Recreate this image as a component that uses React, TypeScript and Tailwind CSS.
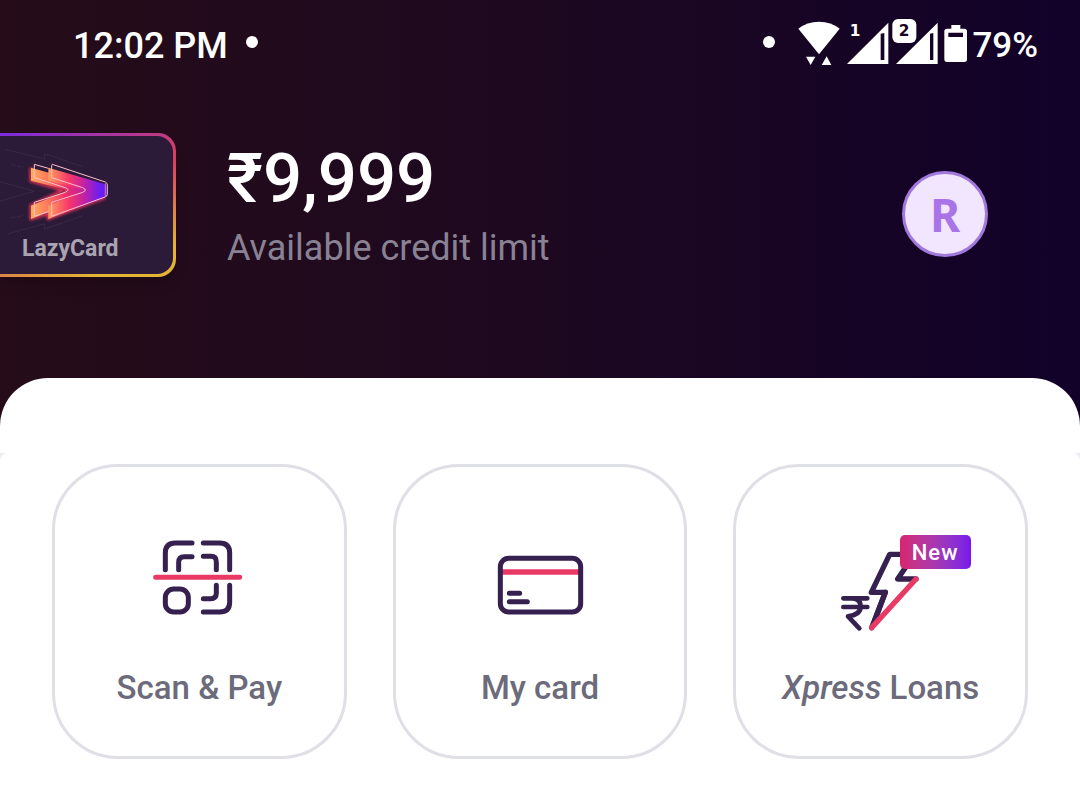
import type { ReactNode } from "react";

const INK = "#35204f";
const PINK = "#e93a66";

function WifiIcon() {
  return (
    <svg viewBox="173 54 126 144" className="h-12 w-[42px]" fill="#fff" aria-hidden="true">
      <path d="M174 86Q200 65 236 65Q272 65 298 86L236 163Z" />
      <path d="M197 170h28l-14 25zM244 195h29l-14-26z" />
    </svg>
  );
}

function SignalOne() {
  return (
    <svg viewBox="320 54 126 144" className="h-12 w-[42px]" fill="#fff" aria-hidden="true">
      <path fillRule="evenodd" d="M444 68V192H320ZM421 101V180H432V99Z" />
      <text x="344" y="109" textAnchor="middle" className="font-['DejaVu_Sans'] text-[46px] font-bold">
        1
      </text>
    </svg>
  );
}

function SignalTwo() {
  return (
    <svg viewBox="455 54 138 144" className="h-12 w-[46px]" fill="#fff" aria-hidden="true">
      <path fillRule="evenodd" d="M592 68V192H467ZM569 101V180H579V99Z" />
      <rect x="456" y="57" width="72" height="72" rx="17" />
      <text x="491" y="109" textAnchor="middle" fill="#170326" className="font-['DejaVu_Sans'] text-[46px] font-bold">
        2
      </text>
    </svg>
  );
}

function BatteryIcon() {
  return (
    <svg viewBox="610 54 69 144" className="h-12 w-[23px]" fill="#fff" aria-hidden="true">
      <path
        fillRule="evenodd"
        d="M632 75H659V86H671Q679 86 679 94V178Q679 186 671 186H619Q611 186 611 178V94Q611 86 619 86H632ZM623 98V111H667V98Z"
      />
    </svg>
  );
}

function StatusBar() {
  return (
    <div className="flex items-center justify-between pt-[18px] pr-[42px] pl-[73px] text-4xl font-medium text-white">
      <div className="flex items-center gap-[18px]">
        <span className="pt-2">12:02 PM</span>
        <span className="size-3 rounded-full bg-white" />
      </div>
      <div className="flex items-center">
        <span className="mr-[23px] size-3 rounded-full bg-white" />
        <WifiIcon />
        <span className="ml-[7px] flex gap-[3px]">
          <SignalOne />
          <SignalTwo />
        </span>
        <span className="ml-[6px] flex">
          <BatteryIcon />
        </span>
        <span className="ml-[5px] pt-2 text-[35px] leading-10">79%</span>
      </div>
    </div>
  );
}

function LazyLogo() {
  return (
    <svg viewBox="0 47 519 300" className="h-[100px] w-full" fill="none" aria-hidden="true">
      <defs>
        <linearGradient id="flameBack" x1="92" y1="0" x2="322" y2="0" gradientUnits="userSpaceOnUse">
          <stop offset="0" stopColor="#ffae5c" />
          <stop offset="0.22" stopColor="#ff795d" />
          <stop offset="0.45" stopColor="#f02e68" />
          <stop offset="0.7" stopColor="#bd20a5" />
          <stop offset="0.92" stopColor="#6a1cf5" />
        </linearGradient>
        <linearGradient id="flameFront" x1="145" y1="0" x2="322" y2="0" gradientUnits="userSpaceOnUse">
          <stop offset="0" stopColor="#ffa05c" />
          <stop offset="0.35" stopColor="#f7376a" />
          <stop offset="0.6" stopColor="#c422a0" />
          <stop offset="0.88" stopColor="#6a1cf5" />
        </linearGradient>
        <filter id="glow" x="-20%" y="-20%" width="140%" height="140%">
          <feGaussianBlur stdDeviation="5" />
        </filter>
      </defs>
      <g stroke="#40304f" strokeWidth="2">
        <path d="M15 87L134 116V100L248 139M0 184L103 213L0 242M22 341L134 310V326L248 286" />
        <path d="M34 133L72 141M34 293L72 285" strokeDasharray="12 6" />
      </g>
      <g stroke="#ff345c" strokeWidth="8" filter="url(#glow)">
        <path d="M93 142V181L190 210L93 256V295L150 278M145 256V295L316 231" />
      </g>
      <path d="M93 142L200 172L250 208L200 255L93 296V256L190 216Q200 211 190 206L93 181Z" fill="url(#flameBack)" />
      <path
        d="M145 142L312 190Q320 193 320 200V222Q320 229 313 232L145 296V256L240 216Q250 211 240 206L145 181Z"
        fill="url(#flameFront)"
      />
      <g stroke="#ffc0cf" strokeWidth="3" strokeLinejoin="round">
        <path d="M145 144L103 132V172L196 202Q212 208 196 216L103 246V288L145 274" />
        <path d="M157 132L316 185Q322 188 322 194V222Q322 228 315 230L155 288V246L248 216Q264 209 248 202L155 172V136Q155 132 157 132Z" />
        <path d="M316 189V228" stroke="#ce78b8" />
      </g>
    </svg>
  );
}

function LazyCard() {
  return (
    <a
      href="#card"
      className="block w-44 shrink-0 rounded-r-[18px] bg-[linear-gradient(160deg,#7b2be0_0%,#d9405f_40%,#d9405f_45%,#e3b535_85%)] py-[3px] pr-[3px] shadow-lg"
    >
      <span className="flex flex-col rounded-r-2xl bg-[#2b1a38] pb-[13px]">
        <LazyLogo />
        <span className="pt-px pl-[22px] text-[23px] leading-6 font-bold text-[#aaa3b0]">LazyCard</span>
      </span>
    </a>
  );
}

function ScanIcon() {
  return (
    <svg viewBox="0 0 360 360" className="size-[120px]" fill="none" stroke={INK} strokeWidth="15" strokeLinecap="round" aria-hidden="true">
      <path d="M79 134V84Q79 54 109 54H159M193 54H242Q272 54 272 84V134M272 181V232Q272 261 242 261H193" />
      <path d="M119 134V112Q119 95 136 95H159M193 94H216Q232 94 232 111V134M232 181V204Q232 221 215 221H193" />
      <rect x="79" y="192" width="69" height="69" rx="25" />
      <path d="M50 157H302" stroke={PINK} />
    </svg>
  );
}

function CardIcon() {
  return (
    <svg viewBox="0 -45 360 360" className="size-[120px]" fill="none" stroke={INK} strokeWidth="15" strokeLinecap="round" aria-hidden="true">
      <path d="M66 96H298" stroke={PINK} strokeWidth="17" strokeLinecap="butt" />
      <rect x="61" y="55" width="241" height="161" rx="25" />
      <path d="M88 160H119M88 185H142" />
    </svg>
  );
}

function LoanIcon() {
  return (
    <span className="relative block">
      <svg viewBox="3 15 360 360" className="size-[120px]" fill="none" stroke={INK} strokeWidth="16" strokeLinecap="round" strokeLinejoin="round" aria-hidden="true">
        <path d="M262 103H209L154 217H196L155 323M260 137L233 177H288" />
        <path d="M196 217L165 300" />
        <path d="M288 177L155 323" stroke={PINK} />
        <path d="M70 235H142M70 261H142M82 235H98Q122 237 122 259Q122 285 84 289L118 325" strokeWidth="14" />
      </svg>
      <span className="absolute top-[10px] left-[79px] flex h-[34px] w-[71px] items-center justify-center rounded-[5px] bg-linear-to-r from-[#d8236f] to-[#7914ec] text-[22px] font-medium tracking-wider text-white">
        New
      </span>
    </span>
  );
}

interface TileProps {
  icon: ReactNode;
  children: ReactNode;
}

function Tile({ icon, children }: TileProps) {
  return (
    <button
      type="button"
      className="flex aspect-square flex-col items-center rounded-[66px] border-3 border-[#dfdfe6] bg-white pt-[58px]"
    >
      {icon}
      <span className="mt-[23px] text-[33px] leading-10 font-medium whitespace-nowrap text-[#6c6b7b]">{children}</span>
    </button>
  );
}

export default function App() {
  return (
    <div className="min-h-screen bg-linear-to-r from-[#250c18] via-[#1d0820] to-[#120129] font-[Roboto,sans-serif]">
      <StatusBar />
      <header className="flex items-center pt-[67px] pr-[92px] pb-[101px]">
        <LazyCard />
        <div className="ml-[51px] flex-1">
          <p className="text-[69px] leading-[78px] font-medium text-white">₹9,999</p>
          <p className="mt-[7px] text-4xl leading-[46px] text-[#888294]">Available credit limit</p>
        </div>
        <button
          type="button"
          aria-label="Profile"
          className="mt-[18px] flex size-[86px] items-center justify-center rounded-full border-3 border-[#a179dc] bg-[#f1e6fe] font-['Noto_Sans'] text-[46px] font-bold text-[#a974e8]"
        >
          R
        </button>
      </header>
      <main className="rounded-t-[48px] bg-white pt-[75px]">
        <div className="bg-[#eeeef2]">
          <section className="grid grid-cols-3 gap-[46px] rounded-t-lg bg-white px-[52px] pt-[11px] pb-[38px]">
            <Tile icon={<ScanIcon />}>Scan &amp; Pay</Tile>
            <Tile icon={<CardIcon />}>My card</Tile>
            <Tile icon={<LoanIcon />}>
              <em>Xpress</em> Loans
            </Tile>
          </section>
        </div>
      </main>
    </div>
  );
}
